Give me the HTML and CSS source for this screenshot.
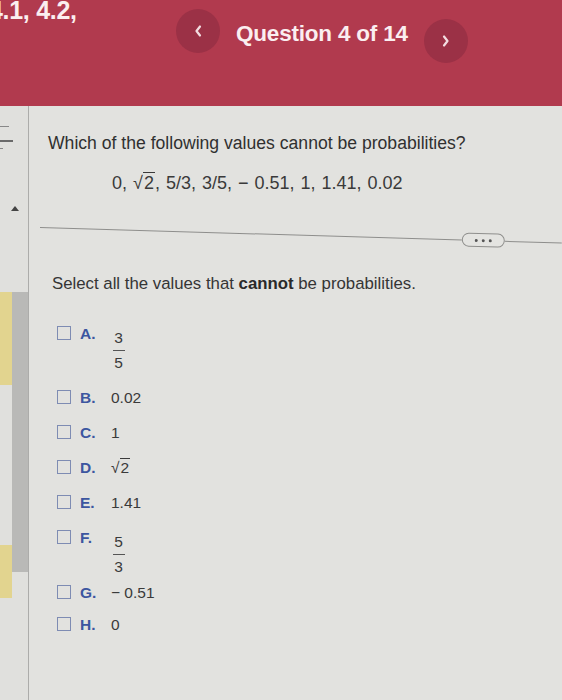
FILE: index.html
```html
<!DOCTYPE html>
<html>
<head>
<meta charset="utf-8">
<link rel="stylesheet" href="styles.css">
</head>
<body>
<div class="page">
  <header class="topbar">
    <div class="crumb"><span class="crumb-text">4.1, 4.2,</span></div>
    <div class="nav">
      <div class="navbtn prev">
        <svg width="10" height="14" viewBox="0 0 10 14"><path d="M7 2.5 L3.5 7 L7 11.5" fill="none" stroke="#f3dde1" stroke-width="2.2" stroke-linecap="round" stroke-linejoin="round"/></svg>
      </div>
      <div class="title">Question 4 of 14</div>
      <div class="navbtn next">
        <svg width="10" height="14" viewBox="0 0 10 14"><path d="M3 2.5 L6.5 7 L3 11.5" fill="none" stroke="#f3dde1" stroke-width="2.2" stroke-linecap="round" stroke-linejoin="round"/></svg>
      </div>
    </div>
  </header>
  <div class="main">
    <aside class="rail">
      <div class="rail-marks">
        <div class="mark m1"></div>
        <div class="mark m2"></div>
        <div class="mark m3"></div>
      </div>
      <div class="tri"></div>
      <div class="track">
        <div class="ycol">
          <div class="yel y1"></div>
          <div class="yspace"></div>
          <div class="yel y2"></div>
        </div>
        <div class="gbar"></div>
      </div>
    </aside>
    <section class="content">
      <p class="question">Which of the following values cannot be probabilities?</p>
      <p class="values">0, <span class="sqrt">√<span class="rad">2</span></span>, 5/3, 3/5, − 0.51, 1, 1.41, 0.02</p>
      <div class="sep">
        <div class="line short"></div>
        <div class="pill"><span></span><span></span><span></span></div>
        <div class="line rest"></div>
      </div>
      <p class="prompt">Select all the values that <b>cannot</b> be probabilities.</p>
      <div class="options">
        <div class="opt first">
          <span class="box"></span><span class="lbl">A.</span>
          <span class="frac"><span class="num">3</span><span class="bar"></span><span class="den">5</span></span>
        </div>
        <div class="opt after-frac">
          <span class="box"></span><span class="lbl">B.</span><span class="val">0.02</span>
        </div>
        <div class="opt">
          <span class="box"></span><span class="lbl">C.</span><span class="val">1</span>
        </div>
        <div class="opt">
          <span class="box"></span><span class="lbl">D.</span><span class="val"><span class="sqrt small">√<span class="rad">2</span></span></span>
        </div>
        <div class="opt">
          <span class="box"></span><span class="lbl">E.</span><span class="val">1.41</span>
        </div>
        <div class="opt">
          <span class="box"></span><span class="lbl">F.</span>
          <span class="frac"><span class="num">5</span><span class="bar"></span><span class="den">3</span></span>
        </div>
        <div class="opt after-frac2">
          <span class="box"></span><span class="lbl">G.</span><span class="val">− 0.51</span>
        </div>
        <div class="opt tight">
          <span class="box"></span><span class="lbl">H.</span><span class="val">0</span>
        </div>
      </div>
    </section>
  </div>
</div>
</body>
</html>
```

FILE: styles.css
```css
html, body {
  margin: 0;
  padding: 0;
}
body {
  width: 562px;
  height: 700px;
  overflow: hidden;
  background: #e2e2df;
  font-family: "Liberation Sans", Arial, sans-serif;
  color: #383838;
}
.page {
  width: 562px;
  height: 700px;
  display: flex;
  flex-direction: column;
}
.topbar {
  height: 106px;
  flex: none;
  background: #b13a4e;
  display: flex;
  align-items: flex-start;
  color: #fbeef0;
}
.crumb {
  width: 176px;
  overflow: hidden;
  flex: none;
}
.crumb-text {
  display: block;
  margin-left: -11px;
  margin-top: -5px;
  font-size: 25px;
  line-height: 30px;
  font-weight: bold;
  letter-spacing: -0.3px;
  white-space: nowrap;
}
.nav {
  display: flex;
  align-items: flex-start;
}
.navbtn {
  width: 44px;
  height: 44px;
  border-radius: 50%;
  background: #9b3146;
  display: flex;
  align-items: center;
  justify-content: center;
  flex: none;
}
.navbtn.prev {
  margin-top: 9px;
}
.navbtn.next {
  margin-top: 19px;
  margin-left: 16px;
}
.title {
  margin-left: 16px;
  margin-top: 21px;
  font-size: 22.5px;
  line-height: 26px;
  font-weight: bold;
  letter-spacing: -0.2px;
  white-space: nowrap;
}
.main {
  flex: 1;
  display: flex;
}
.rail {
  width: 28px;
  flex: none;
  border-right: 1px solid #acacaa;
  background: #e0e0dd;
  display: flex;
  flex-direction: column;
}
.rail-marks {
  padding-top: 20px;
  display: flex;
  flex-direction: column;
}
.mark {
  background: #555;
}
.m1 {
  width: 9px;
  height: 1px;
  background: #888;
}
.m2 {
  width: 13px;
  height: 2px;
  margin-top: 13px;
  background: #6a6a6a;
}
.m3 {
  width: 3px;
  height: 1px;
  margin-top: 6px;
  background: #888;
}
.tri {
  width: 0;
  height: 0;
  margin-top: 57px;
  margin-left: 11px;
  border-left: 4px solid transparent;
  border-right: 4px solid transparent;
  border-bottom: 5px solid #444;
}
.track {
  margin-top: 81px;
  display: flex;
}
.ycol {
  width: 12px;
  display: flex;
  flex-direction: column;
}
.yel {
  background: #e2d48f;
}
.y1 { height: 93px; }
.yspace { height: 160px; }
.y2 { height: 53px; }
.gbar {
  width: 17px;
  height: 280px;
  background: #b9b9b7;
}
.content {
  flex: 1;
  padding-left: 19px;
}
.question {
  margin: 27px 0 0 0;
  font-size: 17.6px;
  line-height: 20px;
  color: #303030;
}
.values {
  margin: 20px 0 0 64px;
  font-size: 18px;
  line-height: 20px;
  word-spacing: 1px;
  color: #3a3a3a;
}
.sqrt {
  font-size: 18px;
}
.rad {
  border-top: 1px solid #3a3a3a;
  padding: 0 1px;
}
.sep {
  margin: 27px 0 0 -8px;
  display: flex;
  align-items: center;
  transform: rotate(1.7deg);
  transform-origin: left center;
}
.line {
  height: 1px;
  background: #8e8e8c;
}
.line.short {
  width: 422px;
}
.line.rest {
  flex: 1;
}
.pill {
  width: 41px;
  height: 12px;
  border: 1.5px solid #8f8f8d;
  border-radius: 7px;
  display: flex;
  align-items: center;
  justify-content: center;
  gap: 4px;
  background: #e4e4e1;
}
.pill span {
  width: 3px;
  height: 3px;
  border-radius: 50%;
  background: #555;
}
.prompt {
  margin: 40px 0 0 4px;
  font-size: 16.8px;
  line-height: 20px;
  color: #353535;
}
.prompt b {
  color: #2a2a2a;
}
.options {
  margin-top: 30px;
  padding-left: 9px;
  display: flex;
  flex-direction: column;
  gap: 15px;
}
.opt {
  display: flex;
  align-items: flex-start;
  font-size: 15.5px;
  line-height: 20px;
}
.opt.after-frac {
  margin-top: 1px;
}
.opt.after-frac2 {
  margin-top: -8px;
}
.opt.tight {
  margin-top: -3px;
}
.box {
  width: 12px;
  height: 12px;
  border: 1.5px solid #7e8cb3;
  margin-top: 2px;
  flex: none;
}
.lbl {
  width: 31px;
  margin-left: 9px;
  font-weight: bold;
  color: #3c56a0;
}
.val {
  color: #3a3a3a;
}
.frac {
  display: flex;
  flex-direction: column;
  align-items: center;
  width: 15px;
  color: #3a3a3a;
  margin-top: 5px;
}
.num, .den {
  line-height: 18px;
}
.bar {
  width: 12px;
  height: 1px;
  background: #555;
  margin: 3px 0;
}
.sqrt.small {
  font-size: 15.5px;
}
```
